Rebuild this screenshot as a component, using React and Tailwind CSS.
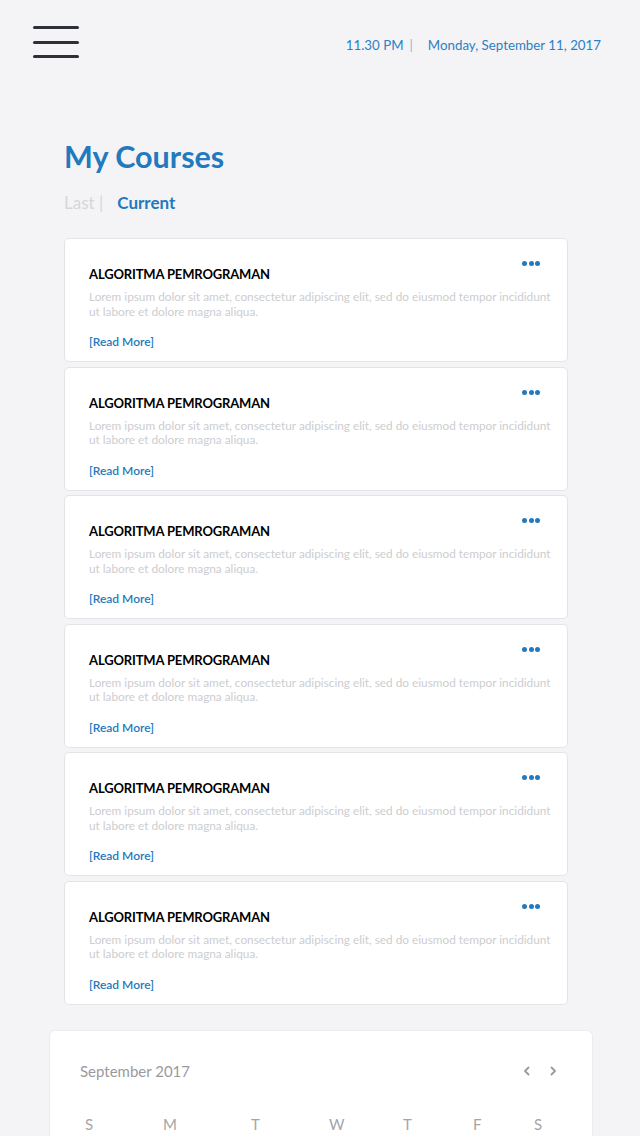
import React from "react";

const courses = Array.from({ length: 6 });

function Card() {
  return (
    <div className="relative h-[124px] mb-[4.6px] bg-white border border-[#e4e4e8] rounded-[5px] pl-[24px] pr-[16px] pt-[26px]">
      <div className="absolute right-[27px] top-[22px] flex gap-[1.5px]">
        <span className="w-[5px] h-[5px] rounded-full bg-[#2379bd]" />
        <span className="w-[5px] h-[5px] rounded-full bg-[#2379bd]" />
        <span className="w-[5px] h-[5px] rounded-full bg-[#2379bd]" />
      </div>
      <div className="text-[13px] leading-[18px] font-bold tracking-[-0.15px] text-black">ALGORITMA PEMROGRAMAN</div>
      <p className="mt-[7px] text-[11.8px] leading-[14.5px] text-[#cdcdd0]">
        Lorem ipsum dolor sit amet, consectetur adipiscing elit, sed do eiusmod tempor incididunt ut labore et dolore magna aliqua.
      </p>
      <div className="mt-[16px] text-[12px] leading-[14px] font-semibold text-[#2379bd]">[Read More]</div>
    </div>
  );
}

export default function App() {
  return (
    <div className="min-h-[1136px] bg-[#f4f4f7] font-['Lato','Open_Sans',sans-serif] overflow-hidden">
      <header className="flex items-start justify-between pl-[33px] pr-[39px] pt-[26px]">
        <div className="flex flex-col gap-[11.5px] w-[46px]">
          <span className="h-[3px] rounded-full bg-[#2e3038]" />
          <span className="h-[3px] rounded-full bg-[#2e3038]" />
          <span className="h-[3px] rounded-full bg-[#2e3038]" />
        </div>
        <div className="mt-[10px] flex items-center text-[13.3px] text-[#2b80c2]">
          <span>11.30 PM</span>
          <span className="ml-[6px] text-[#8ab6da]">|</span>
          <span className="ml-[15px]">Monday, September 11, 2017</span>
        </div>
      </header>

      <main className="pl-[64px] w-[568px]">
        <h1 className="mt-[78px] text-[30.5px] leading-[40px] font-bold text-[#2379bd]">My Courses</h1>
        <div className="mt-[15px] flex items-center text-[17px] leading-[24px]">
          <span className="text-[#d6d6da]">Last |</span>
          <span className="ml-[14px] font-bold text-[#2379bd]">Current</span>
        </div>
        <div className="mt-[23px]">
          {courses.map((_, i) => (
            <Card key={i} />
          ))}
        </div>
      </main>

      <section className="mt-[25px] ml-[49px] w-[544px] h-[140px] bg-white rounded-t-[6px] border border-[#ececf0] border-b-0">
        <div className="flex items-center justify-between pl-[30px] pr-[33px] pt-[29px]">
          <span className="text-[15px] text-[#9a9a9e]">September 2017</span>
          <div className="flex items-center gap-[14px] text-[#9a9a9e]">
            <svg width="12" height="12" viewBox="0 0 12 12" fill="none" stroke="currentColor" strokeWidth="1.8" strokeLinecap="round" strokeLinejoin="round">
              <path d="M7.5 2.5 L4 6 L7.5 9.5" />
            </svg>
            <svg width="12" height="12" viewBox="0 0 12 12" fill="none" stroke="currentColor" strokeWidth="1.8" strokeLinecap="round" strokeLinejoin="round">
              <path d="M4.5 2.5 L8 6 L4.5 9.5" />
            </svg>
          </div>
        </div>
        <div className="mt-[31px] grid grid-cols-[78px_88px_78px_74px_70px_61px_auto] pl-[35px] text-[15px] text-[#a5a5a9]">
          {["S", "M", "T", "W", "T", "F", "S"].map((d, i) => (
            <span key={i}>{d}</span>
          ))}
        </div>
      </section>
    </div>
  );
}
